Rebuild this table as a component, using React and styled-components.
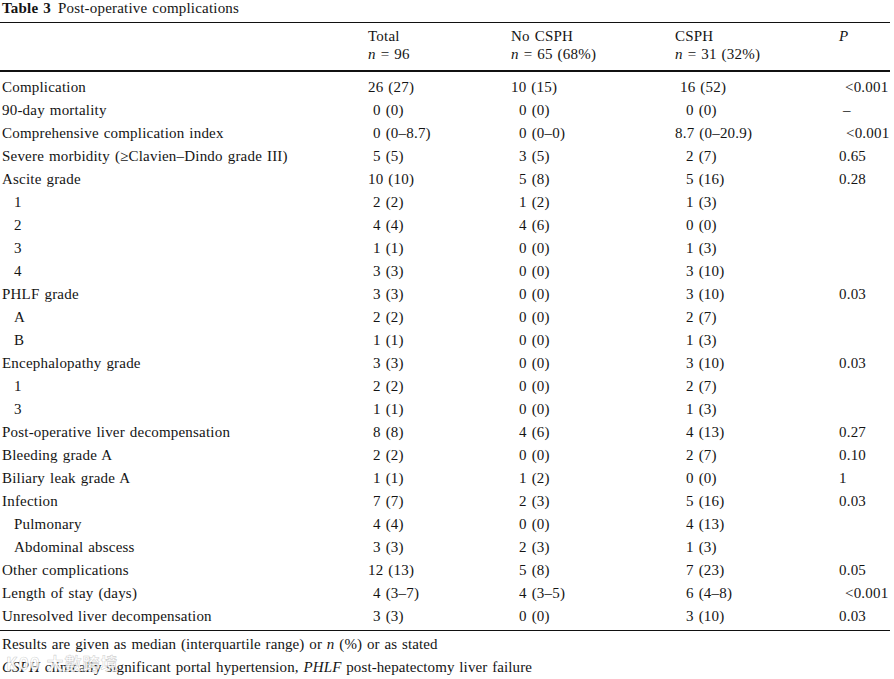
import React from "react";
import styled, { createGlobalStyle } from "styled-components";

const GlobalStyle = createGlobalStyle`
  html, body {
    margin: 0;
    padding: 0;
    background: #fff;
  }
  body {
    font-family: "Liberation Serif", "Times New Roman", serif;
    color: #141414;
    width: 894px;
    height: 679px;
    overflow: hidden;
  }
`;

const Page = styled.div`
  width: 890px;
  position: relative;
  letter-spacing: 0.2px;
  word-spacing: 1px;
`;

const Caption = styled.div`
  height: 22px;
  line-height: 16px;
  font-size: 15px;
  padding-left: 2px;
  b {
    margin-right: 7px;
  }
`;

const Grid = styled.div`
  display: grid;
  grid-template-columns: 368px 143px 164px 164px 51px;
  font-size: 15px;
`;

const HeadRow = styled.div`
  display: contents;
`;

const HeadCell = styled.div`
  border-top: 1px solid #111;
  border-bottom: 2px solid #111;
  padding: 4px 0 7px ${({ $pl }) => $pl || 0}px;
  line-height: 18px;
  white-space: nowrap;
`;

const Row = styled.div`
  display: contents;
`;

const Cell = styled.div`
  height: 23px;
  line-height: 23px;
  white-space: nowrap;
  padding-left: ${({ $pl }) => $pl || 0}px;
  margin-top: ${({ $first }) => ($first ? 4 : 0)}px;
  border-bottom: ${({ $last }) => ($last ? "1px solid #111" : "none")};
  padding-bottom: ${({ $last }) => ($last ? 2 : 0)}px;
`;

const Notes = styled.div`
  padding: 2px 0 0 2px;
  font-size: 15px;
  line-height: 23px;
  letter-spacing: 0.1px;
`;

const Watermark = styled.div`
  position: absolute;
  left: 6px;
  bottom: 4px;
  font-family: "Noto Sans CJK TC", sans-serif;
  font-size: 17px;
  font-weight: 700;
  color: rgba(255, 255, 255, 0.85);
  -webkit-text-stroke: 0.6px rgba(150, 150, 150, 0.45);
  letter-spacing: 1px;
  pointer-events: none;
`;

// [label, labelIndent, total, totalIndent, no, noIndent, cs, csIndent, p, pIndent]
const rows = [
  ["Complication", 0, "26 (27)", 0, "10 (15)", 0, "16 (52)", 5, "<0.001", 6],
  ["90-day mortality", 0, "0 (0)", 5, "0 (0)", 8, "0 (0)", 11, "–", 4],
  ["Comprehensive complication index", 0, "0 (0–8.7)", 5, "0 (0–0)", 8, "8.7 (0–20.9)", 0, "<0.001", 7],
  ["Severe morbidity (≥Clavien–Dindo grade III)", 0, "5 (5)", 5, "3 (5)", 8, "2 (7)", 11, "0.65", 0],
  ["Ascite grade", 0, "10 (10)", 0, "5 (8)", 8, "5 (16)", 11, "0.28", 0],
  ["1", 12, "2 (2)", 5, "1 (2)", 8, "1 (3)", 11, "", 0],
  ["2", 12, "4 (4)", 5, "4 (6)", 8, "0 (0)", 11, "", 0],
  ["3", 12, "1 (1)", 5, "0 (0)", 8, "1 (3)", 11, "", 0],
  ["4", 12, "3 (3)", 5, "0 (0)", 8, "3 (10)", 11, "", 0],
  ["PHLF grade", 0, "3 (3)", 5, "0 (0)", 8, "3 (10)", 11, "0.03", 0],
  ["A", 12, "2 (2)", 5, "0 (0)", 8, "2 (7)", 11, "", 0],
  ["B", 12, "1 (1)", 5, "0 (0)", 8, "1 (3)", 11, "", 0],
  ["Encephalopathy grade", 0, "3 (3)", 5, "0 (0)", 8, "3 (10)", 11, "0.03", 0],
  ["1", 12, "2 (2)", 5, "0 (0)", 8, "2 (7)", 11, "", 0],
  ["3", 12, "1 (1)", 5, "0 (0)", 8, "1 (3)", 11, "", 0],
  ["Post-operative liver decompensation", 0, "8 (8)", 5, "4 (6)", 8, "4 (13)", 11, "0.27", 0],
  ["Bleeding grade A", 0, "2 (2)", 5, "0 (0)", 8, "2 (7)", 11, "0.10", 0],
  ["Biliary leak grade A", 0, "1 (1)", 5, "1 (2)", 8, "0 (0)", 11, "1", 0],
  ["Infection", 0, "7 (7)", 5, "2 (3)", 8, "5 (16)", 11, "0.03", 0],
  ["Pulmonary", 12, "4 (4)", 5, "0 (0)", 8, "4 (13)", 11, "", 0],
  ["Abdominal abscess", 12, "3 (3)", 5, "2 (3)", 8, "1 (3)", 11, "", 0],
  ["Other complications", 0, "12 (13)", 0, "5 (8)", 8, "7 (23)", 11, "0.05", 0],
  ["Length of stay (days)", 0, "4 (3–7)", 5, "4 (3–5)", 8, "6 (4–8)", 11, "<0.001", 6],
  ["Unresolved liver decompensation", 0, "3 (3)", 5, "0 (0)", 8, "3 (10)", 11, "0.03", 0],
];

const headers = [
  { top: "", bottom: "", pl: 2 },
  { top: "Total", bottom: "= 96" },
  { top: "No CSPH", bottom: "= 65 (68%)" },
  { top: "CSPH", bottom: "= 31 (32%)" },
  { top: <i>P</i>, bottom: "" },
];

export default function App() {
  return (
    <Page>
      <GlobalStyle />
      <Caption>
        <b>Table 3</b>Post-operative complications
      </Caption>
      <Grid>
        <HeadRow>
          {headers.map((h, i) => (
            <HeadCell key={i} $pl={h.pl}>
              <div>{h.top || "\u00a0"}</div>
              <div>
                {h.bottom ? (
                  <>
                    <i>n</i> {h.bottom}
                  </>
                ) : (
                  "\u00a0"
                )}
              </div>
            </HeadCell>
          ))}
        </HeadRow>
        {rows.map((r, idx) => {
          const first = idx === 0;
          const last = idx === rows.length - 1;
          return (
            <Row key={idx}>
              <Cell $pl={2 + r[1]} $first={first} $last={last}>{r[0]}</Cell>
              <Cell $pl={r[3]} $first={first} $last={last}>{r[2]}</Cell>
              <Cell $pl={r[5]} $first={first} $last={last}>{r[4]}</Cell>
              <Cell $pl={r[7]} $first={first} $last={last}>{r[6]}</Cell>
              <Cell $pl={r[9]} $first={first} $last={last}>{r[8]}</Cell>
            </Row>
          );
        })}
      </Grid>
      <Notes>
        <div>
          Results are given as median (interquartile range) or <i>n</i> (%) or as stated
        </div>
        <div>
          <i>CSPH</i> clinically significant portal hypertension, <i>PHLF</i> post-hepatectomy liver failure
        </div>
      </Notes>
      <Watermark>K00 大數跨境</Watermark>
    </Page>
  );
}
